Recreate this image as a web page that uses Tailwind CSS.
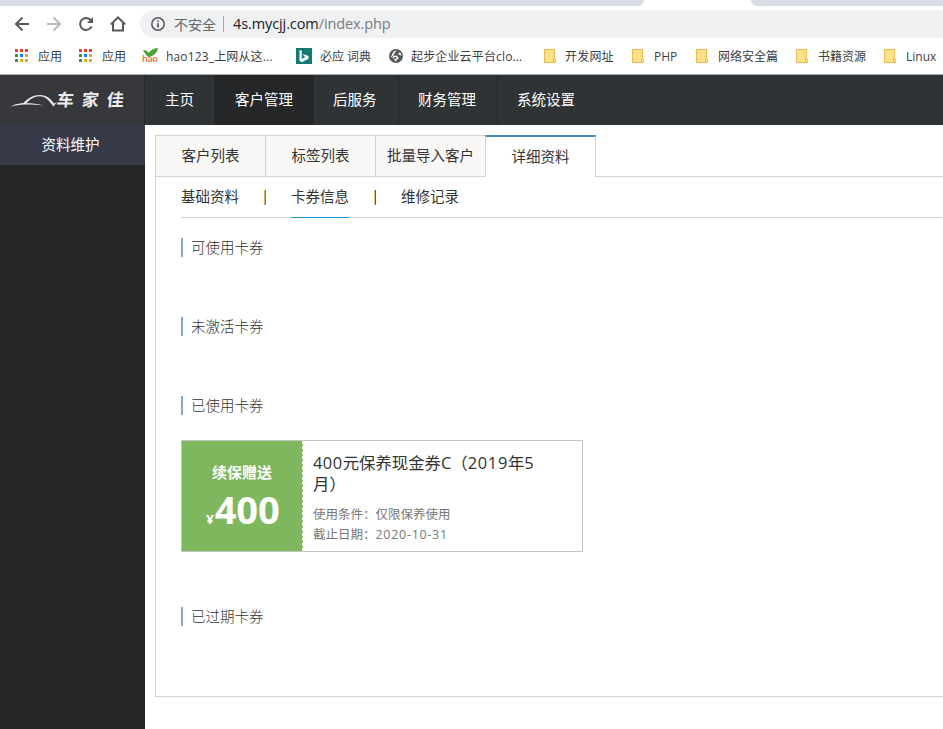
<!DOCTYPE html>
<html lang="zh-CN">
<head>
<meta charset="utf-8">
<title>4s.mycjj.com</title>
<script src="https://cdn.jsdelivr.net/npm/@tailwindcss/browser@4"></script>
</head>
<body class="w-[943px] h-[729px] overflow-hidden bg-white font-['Open_Sans','Noto_Sans_CJK_SC',sans-serif] text-[#333]">
<svg class="hidden">
  <symbol id="apps" viewBox="0 0 13 13"><g fill="#ee3d34"><path d="M0 0h3v3H0zM5 0h3v3H5zM10 0h3v3h-3z"/></g><path fill="#34915a" d="M0 5h3v3H0zM0 10h3v3H0z"/><path fill="#1a7cf0" d="M5 5h3v3H5z"/><path fill="#f3a126" d="M10 5h3v3h-3zM5 10h3v3H5zM10 10h3v3h-3z"/></symbol>
  <symbol id="folder" viewBox="0 0 12 14"><path d="M.5.5h10v8.800l1 1v3.200H.5z" fill="#ffe08a" stroke="#e8bd45"/><path d="M9.500 13v-3.500h1.200" fill="none" stroke="#e8bd45"/></symbol>
</svg>

<!-- browser chrome -->
<div class="h-[6px] flex justify-between">
  <div class="w-[644px] bg-[#dadde5] rounded-br-[6px]"></div>
  <div class="w-[192px] bg-[#dadde5] rounded-bl-[6px]"></div>
</div>
<div class="h-[36px] flex items-center">
  <div class="w-[140px] shrink-0 flex items-center pl-[14px] gap-[16px] text-[#55585c]">
    <svg class="size-4" viewBox="0 0 16 16" fill="none" stroke="currentColor" stroke-width="2"><path d="M15 8H2M8.500 1.500 2 8l6.500 6.500"/></svg>
    <svg class="size-4 text-[#b8babd]" viewBox="0 0 16 16" fill="none" stroke="currentColor" stroke-width="2"><path d="M1 8h13M7.500 1.500 14 8l-6.500 6.500"/></svg>
    <svg class="size-4" viewBox="0 0 16 16" fill="none" stroke="currentColor" stroke-width="2"><path d="M13.600 10.300A6 6 0 1 1 12.600 4"/><path d="M15 1v6H9z" fill="currentColor" stroke="none"/></svg>
    <svg class="size-4" viewBox="0 0 16 16" fill="none" stroke="currentColor" stroke-width="2"><path d="M.800 8.400 8 1.500l7.200 6.900M3 7v7.500h10V7"/></svg>
  </div>
  <div class="flex-1 h-[28px] bg-[#eff0f2] rounded-l-full flex items-center pl-[11px] text-[14px]">
    <svg class="size-[14px] shrink-0" viewBox="0 0 14 14" fill="none" stroke="#55585c" stroke-width="1.500"><circle cx="7" cy="7" r="6.200"/><path d="M7 6.200v4.300M7 3.500v1.600" stroke-width="1.700"/></svg>
    <span class="ml-[9px] w-[42px] text-[#62666a] whitespace-nowrap">不安全</span>
    <span class="w-px h-[16px] bg-[#a5a7aa] ml-[7px] mr-[9px]"></span>
    <span class="text-[14.500px] text-[#202124] tracking-[-0.100px]">4s.mycjj.com<span class="text-[#777b80]">/index.php</span></span>
  </div>
</div>
<div class="h-[33px] flex items-center pl-[15px] pb-[3px] text-[12px] text-[#3c4043] whitespace-nowrap border-b border-[#a9a9a9] [&>div]:shrink-0 [&>div]:flex [&>div]:items-center [&>div>i]:shrink-0 [&>div>i]:not-italic [&>div>i]:mb-[2px]">
  <div class="w-[64px]"><i class="w-[23px]"><svg class="size-[13px]"><use href="#apps"/></svg></i>应用</div>
  <div class="w-[63px]"><i class="w-[23px]"><svg class="size-[13px]"><use href="#apps"/></svg></i>应用</div>
  <div class="w-[154px]"><i class="w-[24px] relative h-[16px]"><svg class="w-[16px] h-[9px]" viewBox="0 0 16 9"><path d="M1 2.500c3-.5 4.500.5 5.700 2.500C8.500 2 11.500.5 16 0c-.7 4.500-4 8-9 9C4.500 8.500 3 5 1 2.500z" fill="#4ba23a"/></svg><b class="absolute left-0 top-[6px] text-[9px] leading-[10px] tracking-[-0.300px] font-semibold text-[#f06a28]">hao</b></i><span class="tracking-[0.150px]">hao123_上网从这...</span></div>
  <div class="w-[93px]"><i class="w-[24px]"><svg class="size-4" viewBox="0 0 16 16"><path fill="#147a76" d="M0 0h16v16H0z"/><path fill="#fff" fill-rule="evenodd" d="m3.500 2 2.300.800v8.200L9.500 9 7.900 8.200 7 5.900l5.500 2v2.800l-6.700 3.600-2.300-1.500z"/></svg></i>必应 词典</div>
  <div class="w-[155px]"><i class="w-[22px]"><svg class="size-[14px]" viewBox="0 0 14 14"><circle cx="7" cy="7" r="7" fill="#55585c"/><path fill="#fff" d="M8 1.700 5.700 3.200v1.500L4.300 5.600v1.200h3.400l1.600 1.500v1.400l-2 1.500v1.100a5.300 5.300 0 0 1-1.500-.2V10.500L4 9 1.600 7.300v-.8l1 .2L3.200 8l2.200.8.4 1.200h1.300l.7-1-.9-1H4.500L3 6.500V5l1.500-1.400V2.300A6 6 0 0 1 8 1.700zM9.500 4.200l1.500-1a6 6 0 0 1 1.400 3.500L10.800 6 9.500 5.500z"/></svg></i><span class="tracking-[0.150px]">起步企业云平台clo...</span></div>
  <div class="w-[88px]"><i class="w-[21px]"><svg class="w-[12px] h-[14px]"><use href="#folder"/></svg></i><span class="tracking-[0.200px]">开发网址</span></div>
  <div class="w-[64px]"><i class="w-[22px]"><svg class="w-[12px] h-[14px]"><use href="#folder"/></svg></i>PHP</div>
  <div class="w-[100px]"><i class="w-[22px]"><svg class="w-[12px] h-[14px]"><use href="#folder"/></svg></i>网络安全篇</div>
  <div class="w-[88px]"><i class="w-[22px]"><svg class="w-[12px] h-[14px]"><use href="#folder"/></svg></i>书籍资源</div>
  <div><i class="w-[22px]"><svg class="w-[12px] h-[14px]"><use href="#folder"/></svg></i>Linux</div>
</div>

<!-- site navigation -->
<header class="h-[50px] bg-[#2f3336] flex text-white text-[14.500px] leading-[50px] whitespace-nowrap">
  <div class="w-[145px] shrink-0 bg-[#36383b] border-r border-[#25282a] flex items-center pl-[11px]">
    <svg class="w-[46px] h-[14px] shrink-0 mt-[2px]" viewBox="0 0 46 14" fill="#ececec"><path d="M0 13C2 10.500 7 9.700 12.500 9 17 4.500 22 1 29 1c7 0 10.500 4 14 8.500L46 8l-3.500 4.500C38 7 35 2.300 28.500 2.300c-5.500 0-9.500 3-13 7 5 0 12 .5 17 2.200-7-.8-13-1-19-.9C8.500 10.800 4 11.300 0 13z"/></svg>
    <span class="-skew-x-6 text-[17px] font-bold tracking-[8px] text-[#eee]">车家佳</span>
  </div>
  <a class="w-[69px] text-center">主页</a>
  <a class="w-[100px] text-center bg-[#252729]">客户管理</a>
  <a class="w-[85px] pl-[19px] border-r border-[#25282a]">后服务</a>
  <a class="w-[99px] pl-[19px] border-r border-[#25282a]">财务管理</a>
  <a class="pl-[19px]">系统设置</a>
</header>

<div class="flex h-[604px]">
  <aside class="w-[145px] shrink-0 bg-[#252628]">
    <div class="h-[40px] bg-[#373a48] text-white text-[14.500px] leading-[39px] text-center pr-[4px]">资料维护</div>
  </aside>
  <main class="flex-1 pl-[10px] pt-[10px] text-[14.500px] min-w-0">
    <nav class="flex h-[42px] leading-[40px] text-center whitespace-nowrap">
      <a class="w-[110px] bg-[#f9f8f6] border-l border-t border-b border-[#d2d2d2]">客户列表</a>
      <a class="w-[110px] bg-[#f9f8f6] border-l border-t border-b border-[#d2d2d2]">标签列表</a>
      <a class="w-[110px] bg-[#f9f8f6] border-l border-t border-b border-[#d2d2d2]">批量导入客户</a>
      <a class="w-[111px] bg-white border-x border-x-[#d2d2d2] border-t-2 border-t-[#4a8ab5]">详细资料</a>
      <span class="flex-1 border-b border-[#d2d2d2]"></span>
    </nav>
    <section class="h-[520px] border-l border-b border-[#d2d2d2] pl-[25px]">
      <div class="h-[41px] border-b border-[#d2d2d2] flex leading-[40px] whitespace-nowrap">
        <a class="w-[58px]">基础资料</a>
        <span class="w-[2px] h-[15px] mt-[13px] ml-[25px] mr-[25px] bg-[linear-gradient(90deg,#d9ac68_50%,#4f82ad_50%)]"></span>
        <a class="w-[58px] h-[41px] border-b border-[#1491c8]">卡券信息</a>
        <span class="w-[2px] h-[15px] mt-[13px] ml-[25px] mr-[25px] bg-[linear-gradient(90deg,#efc28a_50%,#2b65a0_50%)]"></span>
        <a>维修记录</a>
      </div>
      <h3 class="mt-[20px] h-[19px] leading-[19px] border-l-2 border-[#7daad4] pl-[8px] font-light text-[#333]">可使用卡券</h3>
      <h3 class="mt-[60px] h-[19px] leading-[19px] border-l-2 border-[#7daad4] pl-[8px] font-light text-[#333]">未激活卡券</h3>
      <h3 class="mt-[60px] h-[19px] leading-[19px] border-l-2 border-[#7daad4] pl-[8px] font-light text-[#333]">已使用卡券</h3>
      <article class="mt-[25px] w-[402px] h-[112px] border border-[#c4c4c4] flex">
        <div class="w-[121px] shrink-0 bg-[#7eb75d] text-white font-bold text-center border-r border-dashed border-white">
          <div class="mt-[21px] text-[15px] leading-[20px]">续保赠送</div>
          <div class="mt-[5px] leading-[44px] pl-[2px]"><span class="text-[13px] mr-px">¥</span><span class="text-[38px]">400</span></div>
        </div>
        <div class="pl-[10px] pt-[11px]">
          <div class="w-[240px] whitespace-nowrap text-[16.400px] leading-[21px] text-[#333]"><span class="tracking-[0.500px]">400</span>元保养现金券C（<span class="tracking-[0.700px]">2019</span>年5<br>月）</div>
          <div class="mt-[11px] text-[12.500px] leading-[20px] text-[#777]">使用条件：仅限保养使用<br>截止日期：<span class="tracking-[0.700px]">2020-10-31</span></div>
        </div>
      </article>
      <h3 class="mt-[55px] h-[19px] leading-[19px] border-l-2 border-[#7daad4] pl-[8px] font-light text-[#333]">已过期卡券</h3>
    </section>
  </main>
</div>
</body>
</html>
